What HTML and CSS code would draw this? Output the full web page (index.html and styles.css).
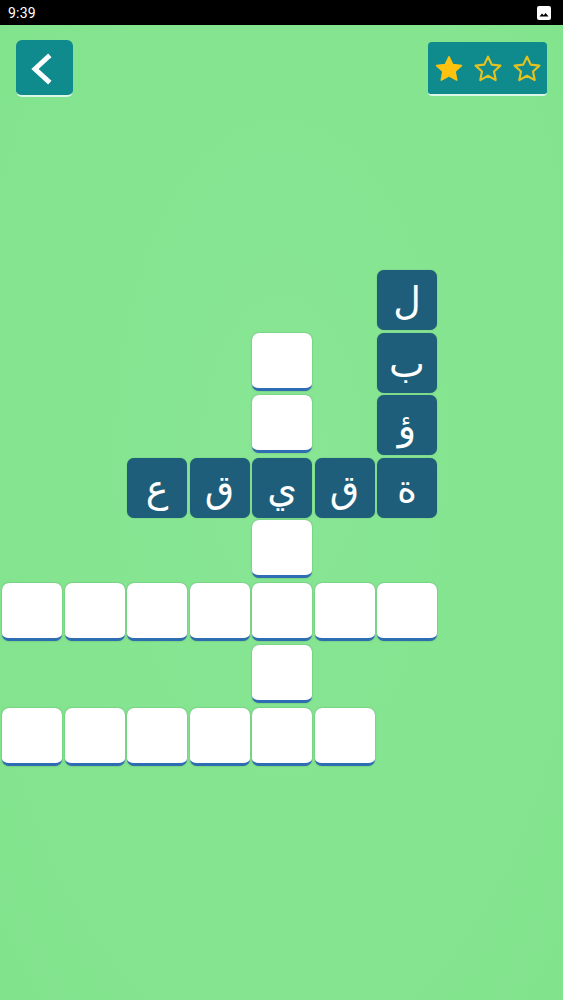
FILE: index.html
```html
<!DOCTYPE html>
<html lang="ar">
<head>
<meta charset="utf-8">
<link rel="stylesheet" href="styles.css">
</head>
<body>
<div class="statusbar">
  <span class="time">9:39</span>
  <svg class="sb-icon" viewBox="0 0 14 14" width="14" height="14">
    <rect x="0" y="0" width="14" height="14" rx="2" fill="#fff"/>
    <path d="M2.5 10.5 L5 7.5 L6.8 9.3 L8.6 7 L11.5 10.5 Z" fill="#000"/>
  </svg>
</div>
<div class="header">
  <div class="back-btn">
    <svg viewBox="0 0 57 55" width="57" height="55">
      <polyline points="32,17 19,29 32,41" fill="none" stroke="#fff" stroke-width="5" stroke-linecap="square" stroke-linejoin="miter"/>
    </svg>
  </div>
  <div class="stars">
    <svg class="star" viewBox="0 0 24 24" width="32" height="32"><path class="full" d="M12 2.8l2.8 5.9 6.5.75-4.8 4.45 1.3 6.4L12 17.1l-5.8 3.2 1.3-6.4-4.8-4.45 6.5-.75z"/></svg>
    <svg class="star" viewBox="0 0 24 24" width="32" height="32"><path class="empty" d="M12 2.8l2.8 5.9 6.5.75-4.8 4.45 1.3 6.4L12 17.1l-5.8 3.2 1.3-6.4-4.8-4.45 6.5-.75z"/></svg>
    <svg class="star" viewBox="0 0 24 24" width="32" height="32"><path class="empty" d="M12 2.8l2.8 5.9 6.5.75-4.8 4.45 1.3 6.4L12 17.1l-5.8 3.2 1.3-6.4-4.8-4.45 6.5-.75z"/></svg>
  </div>
</div>
<div class="board">
  <!-- row 0 -->
  <div class="cell"></div><div class="cell"></div><div class="cell"></div><div class="cell"></div><div class="cell"></div><div class="cell"></div><div class="cell tile solved"><span>ل</span></div>
  <!-- row 1 -->
  <div class="cell"></div><div class="cell"></div><div class="cell"></div><div class="cell"></div><div class="cell tile blank"></div><div class="cell"></div><div class="cell tile solved"><span>ب</span></div>
  <!-- row 2 -->
  <div class="cell"></div><div class="cell"></div><div class="cell"></div><div class="cell"></div><div class="cell tile blank"></div><div class="cell"></div><div class="cell tile solved"><span>ؤ</span></div>
  <!-- row 3 -->
  <div class="cell"></div><div class="cell"></div><div class="cell tile solved"><span>ع</span></div><div class="cell tile solved"><span>ق</span></div><div class="cell tile solved"><span>ي</span></div><div class="cell tile solved"><span>ق</span></div><div class="cell tile solved"><span>ة</span></div>
  <!-- row 4 -->
  <div class="cell"></div><div class="cell"></div><div class="cell"></div><div class="cell"></div><div class="cell tile blank"></div><div class="cell"></div><div class="cell"></div>
  <!-- row 5 -->
  <div class="cell tile blank"></div><div class="cell tile blank"></div><div class="cell tile blank"></div><div class="cell tile blank"></div><div class="cell tile blank"></div><div class="cell tile blank"></div><div class="cell tile blank"></div>
  <!-- row 6 -->
  <div class="cell"></div><div class="cell"></div><div class="cell"></div><div class="cell"></div><div class="cell tile blank"></div><div class="cell"></div><div class="cell"></div>
  <!-- row 7 -->
  <div class="cell tile blank"></div><div class="cell tile blank"></div><div class="cell tile blank"></div><div class="cell tile blank"></div><div class="cell tile blank"></div><div class="cell tile blank"></div><div class="cell"></div>
</div>
</body>
</html>
```
FILE: styles.css
```css
html, body {
  margin: 0;
  padding: 0;
}
body {
  width: 563px;
  height: 1000px;
  overflow: hidden;
  background: radial-gradient(ellipse at 50% 45%, #88e694 0%, #84e48f 60%, #82e38d 100%);
  font-family: Roboto, "Noto Sans", sans-serif;
}
.statusbar {
  height: 25px;
  background: #000;
  display: flex;
  align-items: center;
  justify-content: space-between;
  padding: 0 12px 0 8px;
}
.time {
  color: #fff;
  font-size: 14px;
  letter-spacing: 0.2px;
}
.sb-icon {
  display: block;
}
.header {
  display: flex;
  justify-content: space-between;
  align-items: flex-start;
  padding: 15px 16px 0 16px;
  height: 58px;
}
.back-btn {
  width: 57px;
  height: 55px;
  background: #0f8a8d;
  border-radius: 6px;
  border-bottom: 2px solid #d9f6e6;
  display: flex;
}
.back-btn svg {
  display: block;
}
.stars {
  margin-top: 2px;
  width: 119px;
  height: 54px;
  box-sizing: border-box;
  background: #0f8a8d;
  border-radius: 4px;
  border-bottom: 2px solid #d9f6e6;
  display: flex;
  align-items: center;
  justify-content: space-between;
  padding: 2px 4px 0 5px;
}
.star {
  display: block;
}
.star .full {
  fill: #ffc20e;
  stroke: #ffc20e;
  stroke-width: 1.2;
  stroke-linejoin: round;
}
.star .empty {
  fill: none;
  stroke: #e4c321;
  stroke-width: 1.6;
  stroke-linejoin: round;
}
.board {
  margin: 172px 0 0 2px;
  display: grid;
  grid-template-columns: repeat(7, 60px);
  grid-auto-rows: 60px;
  column-gap: 2.5px;
  row-gap: 2.5px;
}
.tile {
  box-sizing: border-box;
  border-radius: 7px;
}
.blank {
  height: 58px;
  background: #fff;
  border-bottom: 3px solid #2f6db3;
  box-shadow: 0 0 1.5px rgba(40, 90, 60, 0.55);
}
.solved {
  height: 60px;
  background: #1e5e7a;
  box-shadow: 0 0 1px rgba(20, 60, 60, 0.5);
  display: flex;
  align-items: center;
  justify-content: center;
  color: #fff;
  font-family: "DejaVu Sans", "Noto Sans", sans-serif;
  font-size: 38px;
  line-height: 1;
}
.solved span {
  display: block;
  padding-top: 2px;
}
```
